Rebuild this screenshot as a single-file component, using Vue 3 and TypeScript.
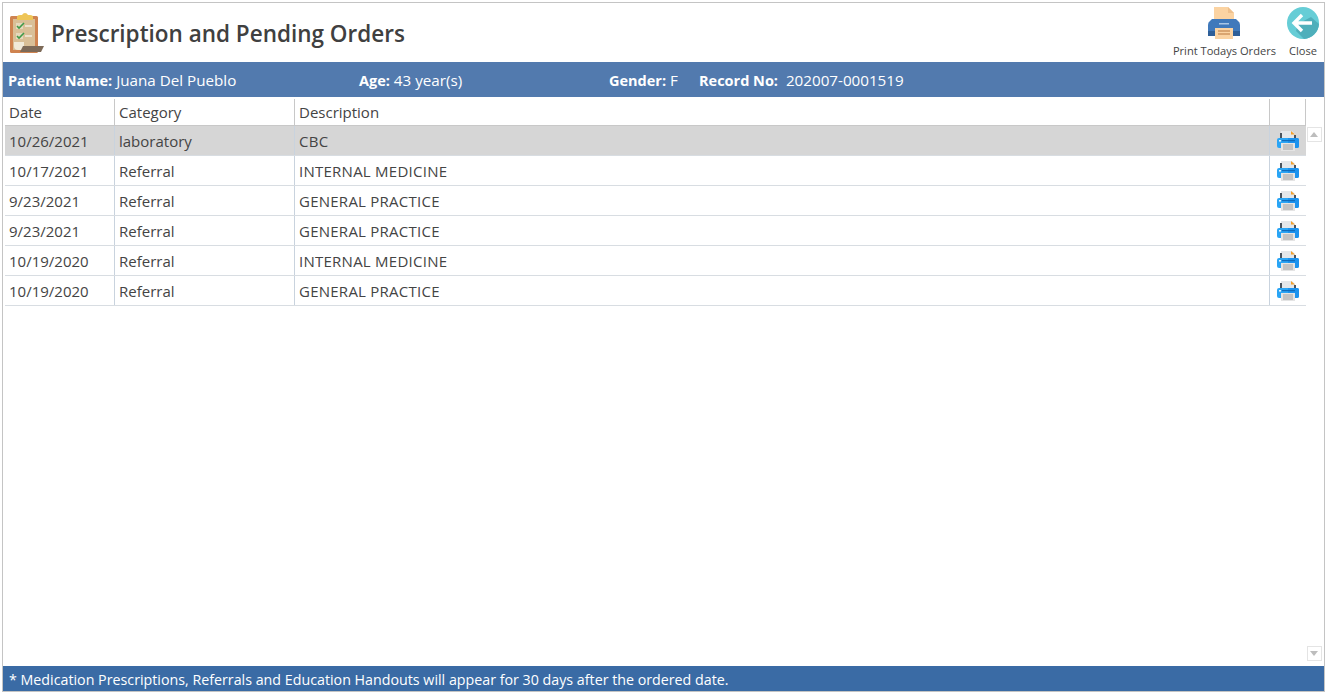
<script setup lang="ts">
interface Order { date: string; category: string; description: string }
const orders: Order[] = [
  { date: '10/26/2021', category: 'laboratory', description: 'CBC' },
  { date: '10/17/2021', category: 'Referral', description: 'INTERNAL MEDICINE' },
  { date: '9/23/2021', category: 'Referral', description: 'GENERAL PRACTICE' },
  { date: '9/23/2021', category: 'Referral', description: 'GENERAL PRACTICE' },
  { date: '10/19/2020', category: 'Referral', description: 'INTERNAL MEDICINE' },
  { date: '10/19/2020', category: 'Referral', description: 'GENERAL PRACTICE' },
]
</script>

<template>
  <div class="page">
    <div class="frame">
      <header class="head">
        <svg class="clip" width="36" height="40" viewBox="0 0 36 40">
          <rect x="0" y="3" width="28" height="37" rx="1.5" fill="#cf8350" />
          <rect x="3" y="6" width="22" height="31" fill="#d9bf97" />
          <path d="M4 29h10v8H8q-4 0-4-4z" fill="#f1ead9" />
          <path d="M10 39l3-6h21l-3 6z" fill="#7d6a58" />
          <path d="M7 4q0-2 3-2h2q1-2 3-2t3 2h2q3 0 3 2v3H7z" fill="#eec557" />
          <rect x="6" y="10" width="7" height="6" fill="#e6d8bd" />
          <rect x="6" y="20" width="7" height="6" fill="#e6d8bd" />
          <path d="M7 13l2 2 5-5M7 23l2 2 5-5" stroke="#3f9a4a" stroke-width="1.6" fill="none" />
          <path d="M15 13h7M15 23h7" stroke="#f3ede0" stroke-width="1.5" />
        </svg>
        <h1 class="title">Prescription and Pending Orders</h1>
        <div class="actions">
          <button class="action print">
            <svg width="36" height="32" viewBox="0 0 36 32">
              <path d="M8 0h14l6 6v8H8z" fill="#fbd3a2" />
              <path d="M22 0l6 6h-6z" fill="#efc08c" />
              <path d="M6 12h24l2 2q2 1 2 4v9q0 2-2 2H4q-2 0-2-2v-9q0-3 2-4z" fill="#4079bb" />
              <rect x="2" y="24" width="32" height="5" fill="#2f5f98" />
              <rect x="13" y="16" width="10" height="1.5" fill="#a9c6e6" />
              <path d="M9 21h18v11H9z" fill="#fbd3a2" />
              <path d="M12 24h12M12 27h12" stroke="#b9793f" stroke-width="1.2" />
            </svg>
            <span>Print Todays Orders</span>
          </button>
          <button class="action close">
            <svg width="32" height="32" viewBox="0 0 32 32">
              <circle cx="16" cy="16" r="16" fill="#66cdd6" />
              <path d="M11 17l13-7 8 7a16 16 0 0 1-15 15l-8-8z" fill="#4fafbb" />
              <path d="M15 8l-8 8 8 8M8 16h17" stroke="#fff" stroke-width="3.4" fill="none" />
            </svg>
            <span>Close</span>
          </button>
        </div>
      </header>

      <section class="patient">
        <span class="f name"><b>Patient Name:</b> Juana Del Pueblo</span>
        <span class="f age"><b>Age:</b> 43 year(s)</span>
        <span class="f gender"><b>Gender:</b> F</span>
        <span class="f record"><b>Record No:</b>&nbsp; 202007-0001519</span>
      </section>

      <main class="list">
        <div class="grid-area">
          <div class="row hdr">
            <div class="c date">Date</div>
            <div class="c cat">Category</div>
            <div class="c desc">Description</div>
            <div class="c ico"></div>
          </div>
          <div v-for="(o, i) in orders" :key="i" class="row body" :class="{ sel: i === 0 }">
            <div class="c date">{{ o.date }}</div>
            <div class="c cat">{{ o.category }}</div>
            <div class="c desc">{{ o.description }}</div>
            <div class="c ico">
              <svg width="22" height="20" viewBox="0 0 22 20">
                <path d="M4 0h11l3 3v6H4z" fill="#e4e7ea" />
                <path d="M14 0l4 3.5h-4z" fill="#f5a02a" />
                <path d="M3 2h2v6H3zM17 4h2v4h-2z" fill="#4a545e" />
                <path d="M2 7h18q2 0 2 2v6q0 2-2 2H2q-2 0-2-2V9q0-2 2-2z" fill="#2aa5f5" />
                <path d="M11 7h9q2 0 2 2v6q0 2-2 2h-9z" fill="#1c93ee" />
                <rect x="2" y="9" width="2" height="1.6" fill="#e8f4ff" />
                <rect x="5" y="9" width="13" height="1.2" fill="#0f6cbc" />
                <rect x="4" y="12" width="14" height="8" fill="#e4e4e4" />
                <path d="M6 14h10M6 16h10M6 18h10" stroke="#a0a0a0" stroke-width="1" />
              </svg>
            </div>
          </div>
        </div>
        <aside class="scroll">
          <div class="sb-head"></div>
          <button class="sb-btn"><i class="up"></i></button>
          <div class="sb-fill"></div>
          <button class="sb-btn"><i class="down"></i></button>
        </aside>
      </main>

      <footer class="foot">* Medication Prescriptions, Referrals and Education Handouts will appear for 30 days after the ordered date.</footer>
    </div>
  </div>
</template>

<style>
html, body { margin: 0; background: #fff; }
</style>

<style scoped>
.page {
  width: 1328px;
  height: 696px;
  padding: 2px 3px 4px 2px;
  box-sizing: border-box;
  font-family: "Open Sans", "Noto Sans", sans-serif;
  color: #444;
  overflow: hidden;
}
.frame {
  height: 100%;
  box-sizing: border-box;
  border: 1px solid #c4c4c4;
  display: flex;
  flex-direction: column;
}
.head {
  height: 59px;
  flex: none;
  display: flex;
  align-items: center;
  padding-left: 7px;
}
.clip { margin-top: 1px; }
.title {
  margin: 2px 0 0 5px;
  font-size: 22.5px;
  font-weight: 600;
  color: #404040;
}
.actions {
  margin-left: auto;
  display: flex;
  align-self: flex-start;
  gap: 11px;
  padding: 4px 5px 0 0;
}
.action {
  border: 0;
  background: none;
  padding: 0;
  font: inherit;
  font-size: 11.1px;
  color: #444;
  display: flex;
  flex-direction: column;
  align-items: center;
  gap: 4px;
}
.action svg { display: block; height: 32px; }
.action span { line-height: 16px; white-space: nowrap; }
.patient {
  height: 35px;
  flex: none;
  background: #527aae;
  color: #fff;
  display: flex;
  align-items: center;
  font-size: 15.2px;
  padding: 1px 0 0 5px;
  box-sizing: border-box;
}
.patient b { font-weight: 700; font-size: 14.5px; }
.f { white-space: nowrap; }
.name { width: 351px; }
.age { width: 250px; }
.gender { width: 90px; }
.list {
  flex: 1;
  display: flex;
  min-height: 0;
}
.grid-area {
  width: 1301px;
  margin-left: 2px;
  flex: none;
}
.row {
  display: flex;
  height: 30px;
  box-sizing: border-box;
  border-bottom: 1px solid #d8dde2;
  font-size: 15px;
}
.hdr {
  height: 29px;
  border-bottom: 1px solid #c8c8c8;
}
.sel { background: #d6d6d6; }
.c {
  display: flex;
  align-items: center;
  box-sizing: border-box;
  border-right: 1px solid #c9d3de;
  padding: 1px 0 0 4px;
  white-space: nowrap;
}
.hdr .c { margin-top: 2px; border-right-color: #c8c8c8; padding-top: 0; }
.body .desc { letter-spacing: 0.25px; }
.date { width: 110px; }
.cat { width: 180px; }
.desc { width: 975px; }
.ico { width: 36px; padding: 0 0 0 7px; border-right: 0; }
.hdr .ico { border-right: 1px solid #c8c8c8; }
.ico svg { display: block; }
.scroll {
  flex: 1;
  display: flex;
  flex-direction: column;
  align-items: center;
}
.sb-head { height: 30px; width: 100%; flex: none; }
.sb-fill { flex: 1; }
.sb-btn {
  flex: none;
  width: 15px;
  height: 15px;
  margin: 0 2px 5px 0;
  padding: 0;
  border: 1px solid #e4e4e4;
  background: #fff;
  display: flex;
  align-items: center;
  justify-content: center;
}
.up, .down { width: 0; height: 0; border-left: 4px solid transparent; border-right: 4px solid transparent; }
.up { border-bottom: 5px solid #bdbdbd; }
.down { border-top: 5px solid #bdbdbd; }
.foot {
  height: 25px;
  flex: none;
  background: #3a6ba5;
  color: #fff;
  font-size: 14.25px;
  line-height: 27px;
  padding-left: 6px;
  white-space: nowrap;
}
</style>
